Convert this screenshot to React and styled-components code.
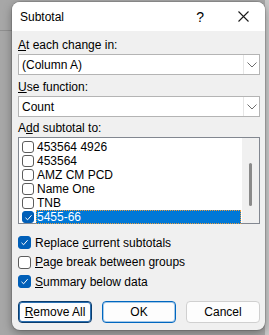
import styled, { createGlobalStyle } from "styled-components"

const GlobalStyle = createGlobalStyle`
    html, body{
        margin: 0;
        padding: 0;
    }
    body{
        font-family: "Liberation Sans", Arial, sans-serif;
        font-size: 12px;
        color: #000000;
    }
`

const items = [
    { name: "453564 4926", checked: false },
    { name: "453564", checked: false },
    { name: "AMZ CM PCD", checked: false },
    { name: "Name One", checked: false },
    { name: "TNB", checked: false },
    { name: "5455-66", checked: true, selected: true },
]

function Check({ checked, size }){
    return (
        <Box checked={checked} size={size}>
            {checked && (
                <svg width="9" height="9" viewBox="0 0 9 9">
                    <path d="M1.5 4.8 L3.6 6.8 L7.6 2.2" fill="none" stroke="#ffffff" strokeWidth="1" />
                </svg>
            )}
        </Box>
    )
}

function Chevron(){
    return (
        <svg width="10" height="6" viewBox="0 0 10 6">
            <path d="M0.5 0.5 L5 5 L9.5 0.5" fill="none" stroke="#6e6e6e" strokeWidth="1" />
        </svg>
    )
}

function Select({ value }){
    return (
        <SelectStyle>
            <span>{value}</span>
            <ArrowCell><Chevron /></ArrowCell>
        </SelectStyle>
    )
}

export default function App(){
    return (
        <Sheet>
            <GlobalStyle />
            <Dialog>
                <TitleBar>
                    <span>Subtotal</span>
                    <TitleButtons>
                        <Help>?</Help>
                        <svg width="11" height="11" viewBox="0 0 11 11">
                            <path d="M0.5 0.5 L10.5 10.5 M10.5 0.5 L0.5 10.5" stroke="#1a1a1a" strokeWidth="1.1" />
                        </svg>
                    </TitleButtons>
                </TitleBar>
                <Body>
                    <Label top={6}><u>A</u>t each change in:</Label>
                    <Select value="(Column A)" />
                    <Label top={4}><u>U</u>se function:</Label>
                    <Select value="Count" />
                    <Label top={3}>A<u>d</u>d subtotal to:</Label>
                    <ListBox>
                        <Rows>
                            {items.map((it) => (
                                <Row key={it.name}>
                                    <Check checked={it.checked} size={12} />
                                    <RowText selected={it.selected}>{it.name}</RowText>
                                </Row>
                            ))}
                        </Rows>
                        <ScrollTrack>
                            <Thumb />
                        </ScrollTrack>
                    </ListBox>
                    <Options>
                        <Option><Check checked size={13} /><span>Replace <u>c</u>urrent subtotals</span></Option>
                        <Option><Check size={13} /><span><u>P</u>age break between groups</span></Option>
                        <Option><Check checked size={13} /><span><u>S</u>ummary below data</span></Option>
                    </Options>
                    <Buttons>
                        <Button kind="focus"><u>R</u>emove All</Button>
                        <Button kind="default">OK</Button>
                        <Button>Cancel</Button>
                    </Buttons>
                </Body>
            </Dialog>
        </Sheet>
    )
}

const Sheet = styled.div`
    width: 269px;
    height: 335px;
    box-sizing: border-box;
    padding: 2px 0 0 12px;
    overflow: hidden;
    background-color: #a7a7a7;
    background-image:
        linear-gradient(#8f8f8f, #8f8f8f),
        linear-gradient(#c9c9c9, #c9c9c9);
    background-size: 12px 1px, 4px 100%;
    background-position: 0 30px, 265px 0;
    background-repeat: no-repeat;
`

const Dialog = styled.div`
    width: 253px;
    height: 328px;
    border-radius: 8px;
    background: #f0f0f0;
    overflow: hidden;
    box-shadow: 0 3px 10px rgba(0,0,0,0.35), 0 0 0 1px rgba(0,0,0,0.12);
    display: flex;
    flex-direction: column;
`

const TitleBar = styled.div`
    height: 29px;
    flex-shrink: 0;
    background: #ffffff;
    display: flex;
    align-items: center;
    justify-content: space-between;
    padding: 0 16px 0 8px;
    font-size: 12px;
`

const TitleButtons = styled.div`
    display: flex;
    align-items: center;
    gap: 34px;
`

const Help = styled.span`
    font-size: 14px;
    line-height: 14px;
`

const Body = styled.div`
    padding: 0 5px 8px 6px;
    display: flex;
    flex-direction: column;
`

const Label = styled.div`
    margin-top: ${props => props.top}px;
    line-height: 16px;
    height: 16px;
    margin-bottom: 1px;
`

const SelectStyle = styled.div`
    height: 21px;
    box-sizing: border-box;
    background: #ffffff;
    border: 1px solid #b4b4b4;
    display: flex;
    align-items: center;
    span{
        flex: 1;
        padding-left: 3px;
    }
`

const ArrowCell = styled.div`
    width: 15px;
    height: 19px;
    border-left: 1px solid #e6e6e6;
    display: flex;
    align-items: center;
    justify-content: center;
`

const ListBox = styled.div`
    height: 87px;
    box-sizing: border-box;
    border: 1px solid #828790;
    background: #ffffff;
    display: flex;
`

const Rows = styled.div`
    flex: 1;
    padding: 2px 1px 0 3px;
    display: flex;
    flex-direction: column;
`

const Row = styled.div`
    height: 14px;
    display: flex;
    align-items: center;
    gap: 2px;
`

const RowText = styled.span`
    flex: 1;
    height: 14px;
    line-height: 14px;
    padding-left: 1px;
    box-sizing: border-box;
    color: ${props => props.selected ? "#ffffff" : "#000000"};
    background: ${props => props.selected ? "#0078d7" : "transparent"};
    outline: ${props => props.selected ? "1px dotted #e89a3c" : "none"};
    outline-offset: -1px;
`

const ScrollTrack = styled.div`
    width: 17px;
    background: #f0f0f0;
    display: flex;
    justify-content: center;
    padding-top: 25px;
`

const Thumb = styled.div`
    width: 3px;
    height: 43px;
    border-radius: 2px;
    background: #8a8a8a;
`

const Box = styled.span`
    width: ${props => props.size}px;
    height: ${props => props.size}px;
    box-sizing: border-box;
    flex-shrink: 0;
    border-radius: 3px;
    border: 1px solid ${props => props.checked ? "#005fb8" : "#5c5c5c"};
    background: ${props => props.checked ? "#005fb8" : "#ffffff"};
    display: flex;
    align-items: center;
    justify-content: center;
`

const Options = styled.div`
    margin-top: 9px;
    display: flex;
    flex-direction: column;
`

const Option = styled.div`
    height: 19.5px;
    display: flex;
    align-items: center;
    gap: 4px;
`

const Buttons = styled.div`
    margin-top: 9px;
    display: flex;
    gap: 10px;
`

const Button = styled.button`
    width: 74px;
    height: 22px;
    box-sizing: border-box;
    border-radius: 4px;
    font-family: inherit;
    font-size: 12px;
    color: #000000;
    padding: 0;
    background: #fdfdfd;
    border: ${props => props.kind === "default" ? "1px solid #0067c0" : props.kind === "focus" ? "1px solid #0a3d6e" : "1px solid #d0d0d0"};
    box-shadow: ${props => props.kind === "focus" ? "inset 0 0 0 1px #2a6fb0" : props.kind === "default" ? "inset 0 0 0 1px rgba(0,103,192,0.35)" : "none"};
`
